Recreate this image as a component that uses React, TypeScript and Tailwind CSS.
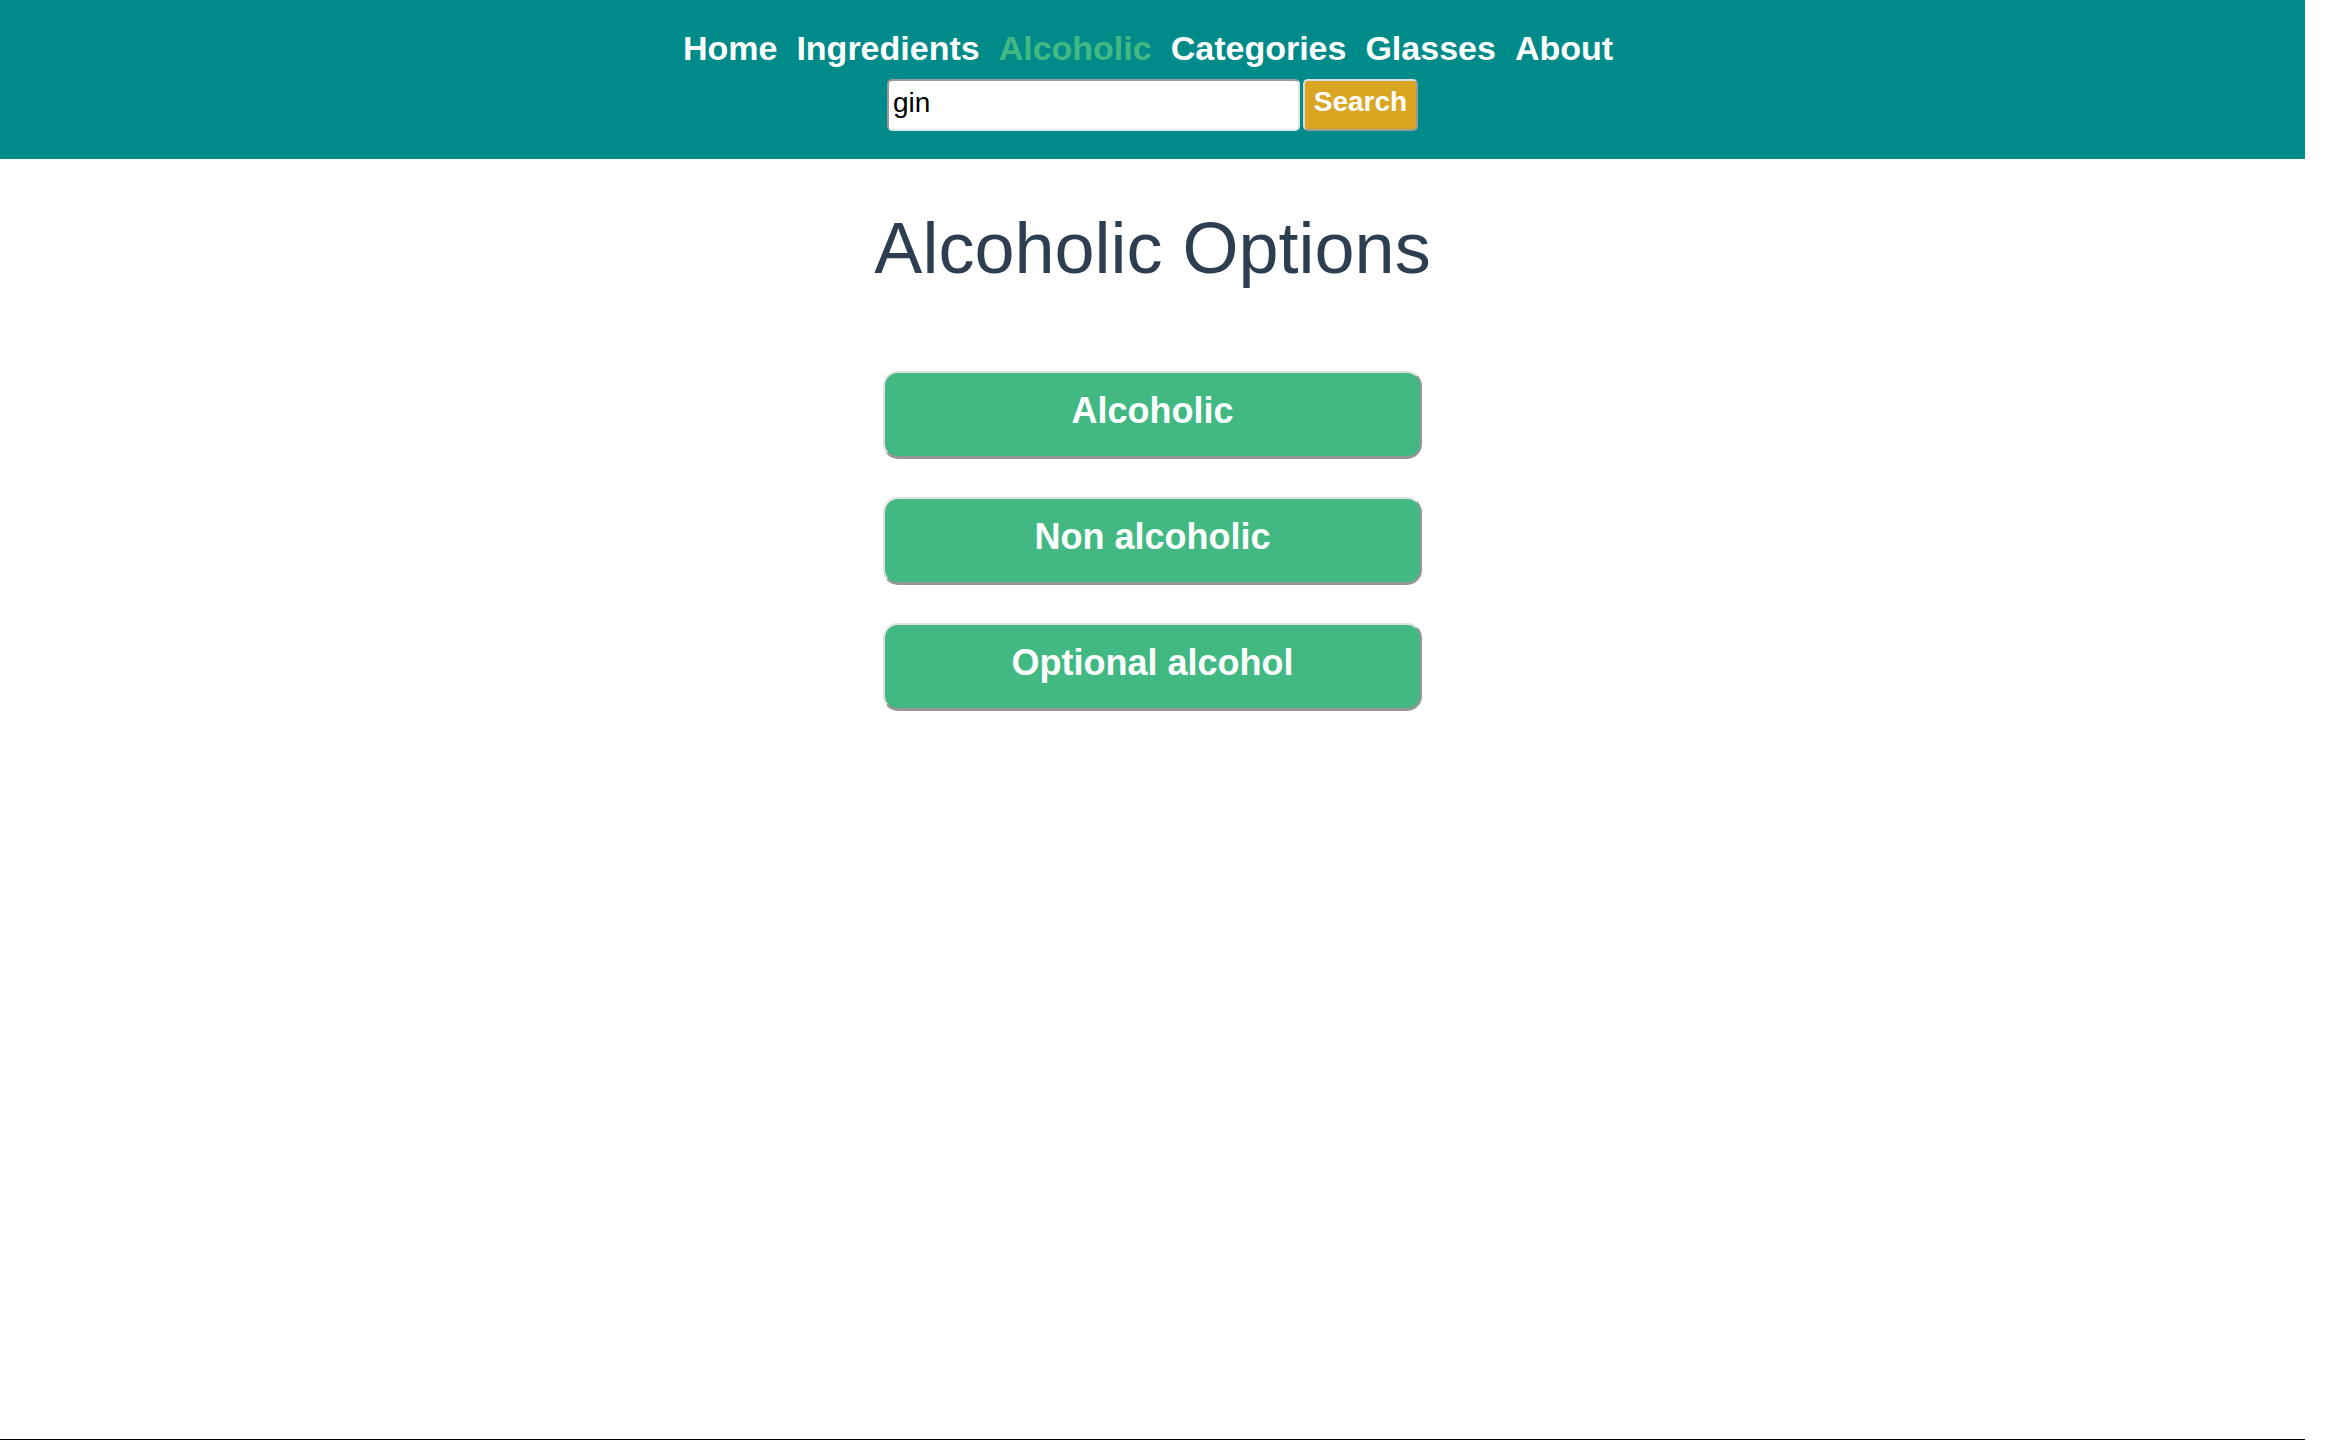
import { useState } from 'react';

const navLinks = ['Home', 'Ingredients', 'Alcoholic', 'Categories', 'Glasses', 'About'];
const options = ['Alcoholic', 'Non alcoholic', 'Optional alcohol'];

const App = () => {
  //search input value
  const [query, setQuery] = useState('gin');

  return (
    <div className="w-[2305px] h-[1454px] flex flex-col bg-white font-['Liberation_Sans',Arial,sans-serif] text-[#2c3e50]">
      <header className="bg-[#008b8b] h-[159px] flex flex-col items-center pt-[29px]">
        <nav className="flex gap-[19px] mr-[9px] text-[34px] leading-[39px] font-bold">
          {navLinks.map((link) => (
            <a key={link} href="#" className={link === 'Alcoholic' ? 'text-[#42b983]' : 'text-white'}>
              {link}
            </a>
          ))}
        </nav>
        <form className="flex gap-[3px] mt-[11px]" onSubmit={(e) => e.preventDefault()}>
          <input
            value={query}
            onChange={(e) => setQuery(e.target.value)}
            className="w-[413px] h-[52px] bg-white text-black text-[28px] px-[4px] pb-[4px] rounded-[5px] border-2 border-t-[#9a9a9a] border-l-[#9a9a9a] border-b-[#e6e6e6] border-r-[#e6e6e6] outline-none"
          />
          <button className="w-[115px] h-[52px] bg-[#daa520] text-white font-bold text-[28px] rounded-[5px] border-2 border-t-[#dcdcdc] border-l-[#dcdcdc] border-b-[#9a9a9a] border-r-[#9a9a9a] pb-[6px]">
            Search
          </button>
        </form>
      </header>

      <main className="flex-1 flex flex-col items-center">
        <h1 className="text-[72px] font-normal mt-[35px]">Alcoholic Options</h1>
        <div className="flex flex-col gap-[38px] mt-[69px]">
          {options.map((opt) => (
            <button
              key={opt}
              className="w-[539px] h-[88px] bg-[#42b983] text-white font-bold text-[36px] rounded-[15px] border-2 border-t-[#e0e0e0] border-l-[#e0e0e0] border-b-[#969696] border-r-[#969696] border-b-[3px] pb-[8px]"
            >
              {opt}
            </button>
          ))}
        </div>
      </main>

      <footer className="h-[15px] border-t border-black" />
    </div>
  );
};

export default App;
